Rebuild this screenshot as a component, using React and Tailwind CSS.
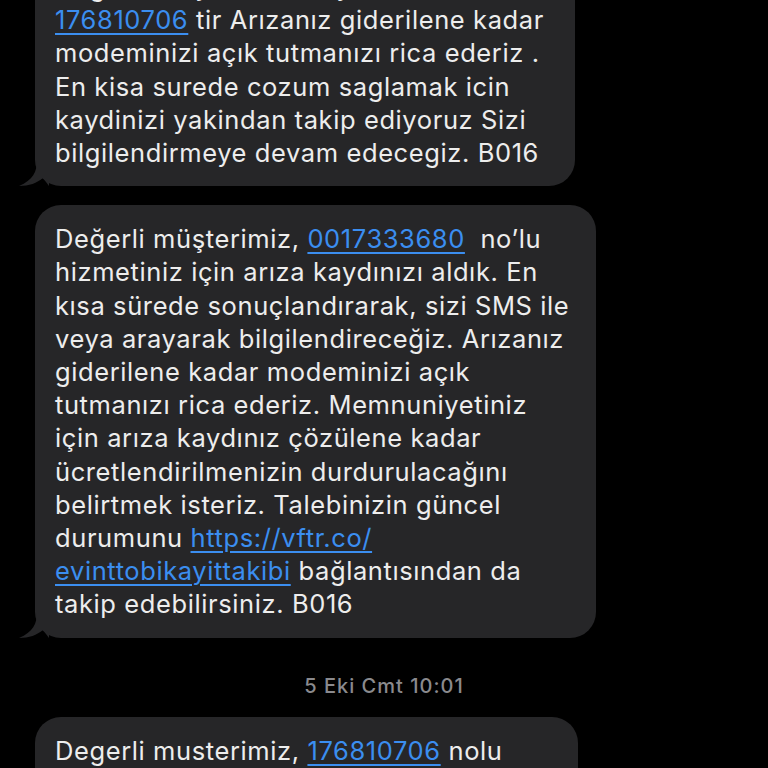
// Dark SMS thread (received messages).

const font = { fontFamily: '"Inter", "Noto Sans", sans-serif' };

// Blue link inside a bubble.
function Link({ children }) {
  return (
    <span className="text-[#3b8ef0] underline decoration-2 underline-offset-[4px]">
      {children}
    </span>
  );
}

// Tail at the bottom-left corner of a received bubble.
function Tail() {
  return (
    <svg
      className="absolute left-[-16px] bottom-0"
      width="30"
      height="26"
      viewBox="0 0 30 26"
    >
      <path
        d="M18 0 C18 12 14 20 0 26 C10 26 18 23 24 18 L30 26 L30 0 Z"
        fill="#262628"
      />
    </svg>
  );
}

function Bubble({ lines, width, tail }) {
  return (
    <div
      className={`relative ml-[35px] rounded-[26px] bg-[#262628] pl-[20px] pr-4 py-[17px] text-[25.5px] leading-[33.2px] tracking-[0.6px] text-[#ededed] ${width}`}
    >
      {lines.map((line, i) => (
        <div key={i} className="whitespace-nowrap">
          {line}
        </div>
      ))}
      {tail && <Tail />}
    </div>
  );
}

export default function App() {
  return (
    <div className="h-[768px] w-full overflow-hidden bg-black" style={font}>
      <div className="-mt-[47px] flex flex-col">
        {/* Previous message */}
        <Bubble
          width="w-[540px]"
          tail
          lines={[
            "Değerli müşterimiz, kayıt numaranız",
            <>
              <Link>176810706</Link> tir Arızanız giderilene kadar
            </>,
            "modeminizi açık tutmanızı rica ederiz .",
            "En kisa surede cozum saglamak icin",
            "kaydinizi yakindan takip ediyoruz Sizi",
            "bilgilendirmeye devam edecegiz. B016",
          ]}
        />

        {/* Fault record message */}
        <div className="mt-[19px]">
          <Bubble
            width="w-[561px]"
            tail
            lines={[
              <>
                Değerli müşterimiz, <Link>0017333680</Link>&nbsp; no’lu
              </>,
              "hizmetiniz için arıza kaydınızı aldık. En",
              "kısa sürede sonuçlandırarak, sizi SMS ile",
              "veya arayarak bilgilendireceğiz. Arızanız",
              "giderilene kadar modeminizi açık",
              "tutmanızı rica ederiz. Memnuniyetiniz",
              "için arıza kaydınız çözülene kadar",
              "ücretlendirilmenizin durdurulacağını",
              "belirtmek isteriz. Talebinizin güncel",
              <>
                durumunu <Link>https://vftr.co/</Link>
              </>,
              <>
                <Link>evinttobikayittakibi</Link> bağlantısından da
              </>,
              "takip edebilirsiniz. B016",
            ]}
          />
        </div>

        {/* Date separator */}
        <div className="mt-[36px] text-center text-[20px] leading-[24px] tracking-[1px] font-medium text-[#8a8a8e]">
          5 Eki Cmt 10:01
        </div>

        {/* Latest message */}
        <div className="mt-[19px]">
          <Bubble
            width="w-[543px]"
            lines={[
              <>
                Degerli musterimiz, <Link>176810706</Link> nolu
              </>,
              "hizmetinize ait ariza kaydiniz alinmistir.",
            ]}
          />
        </div>
      </div>
    </div>
  );
}
